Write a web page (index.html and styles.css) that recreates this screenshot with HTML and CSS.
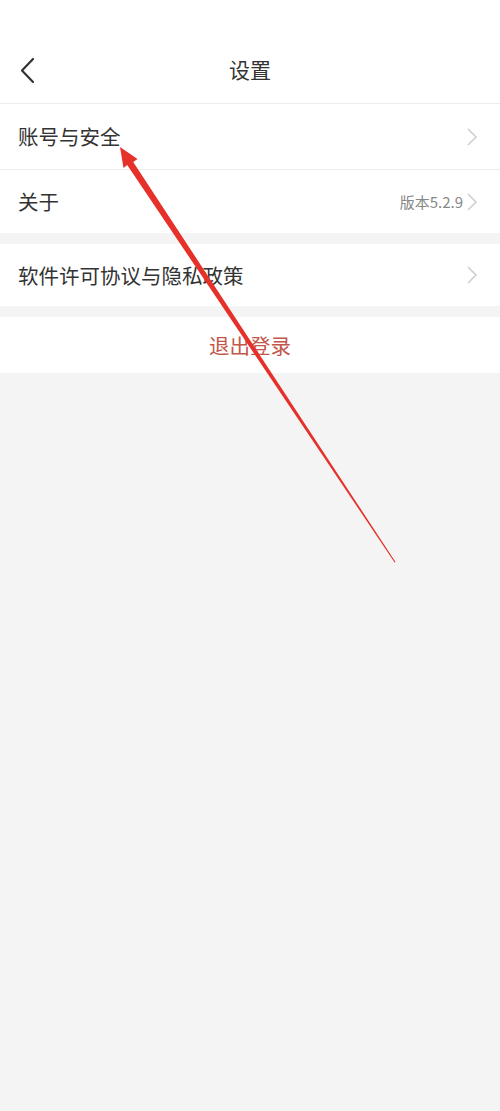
FILE: index.html
```html
<!DOCTYPE html>
<html lang="zh">
<head>
<meta charset="utf-8">
<link rel="stylesheet" href="styles.css">
</head>
<body>
<div class="page">
  <header class="topbar">
    <svg class="back" width="20" height="28" viewBox="0 0 20 28"><path d="M15 3 L4 14.5 L15 26" fill="none" stroke="#333" stroke-width="2.2" stroke-linecap="round" stroke-linejoin="round"/></svg>
    <div class="title">设置</div>
  </header>
  <section class="group">
    <div class="row r1"><span class="label">账号与安全</span><span class="right"><svg class="chev" width="12" height="20" viewBox="0 0 12 20"><path d="M2 2 L10 10 L2 18" fill="none" stroke="#cfcfcf" stroke-width="1.6"/></svg></span></div>
    <div class="row r2"><span class="label">关于</span><span class="right"><span class="value">版本5.2.9</span><svg class="chev" width="12" height="20" viewBox="0 0 12 20"><path d="M2 2 L10 10 L2 18" fill="none" stroke="#cfcfcf" stroke-width="1.6"/></svg></span></div>
  </section>
  <section class="group">
    <div class="row r3"><span class="label">软件许可协议与隐私政策</span><span class="right"><svg class="chev" width="12" height="20" viewBox="0 0 12 20"><path d="M2 2 L10 10 L2 18" fill="none" stroke="#cfcfcf" stroke-width="1.6"/></svg></span></div>
  </section>
  <section class="group">
    <div class="logout">退出登录</div>
  </section>
  <svg class="annot" width="500" height="1111" viewBox="0 0 500 1111">
    <polygon points="120,147 137.5,159 133.2,162 395.5,562 394.6,562.4 127.2,165 123.5,168" fill="#e5312a"/>
  </svg>
</div>
</body>
</html>
```
FILE: styles.css
```css
html, body {
  margin: 0;
  padding: 0;
  background: #f4f4f4;
}
body {
  font-family: "Noto Sans CJK SC", "Noto Sans", sans-serif;
  color: #333;
}
.page {
  position: relative;
  width: 500px;
  min-height: 1111px;
  background: #f4f4f4;
}
.topbar {
  position: relative;
  height: 67px;
  padding-top: 36px;
  background: #fff;
  display: flex;
  align-items: center;
  justify-content: center;
  border-bottom: 1px solid #ececec;
}
.back {
  position: absolute;
  left: 18px;
  top: 56px;
}
.title {
  font-size: 21px;
  color: #333;
  line-height: 1;
}
.group {
  background: #fff;
  margin-bottom: 11px;
}
.row {
  display: flex;
  align-items: center;
  justify-content: space-between;
  padding: 0 22px 0 18px;
}
.r1 {
  height: 65px;
  border-bottom: 1px solid #ececec;
}
.r2 {
  height: 63px;
}
.r3 {
  height: 62px;
}
.label {
  font-size: 20.5px;
  line-height: 1;
  color: #333;
}
.right {
  display: flex;
  align-items: center;
  gap: 3px;
}
.value {
  font-size: 15px;
  color: #888;
  line-height: 1;
}
.chev {
  display: block;
}
.logout {
  height: 56px;
  display: flex;
  align-items: center;
  justify-content: center;
  font-size: 20.5px;
  color: #c2574a;
}
.annot {
  position: absolute;
  left: 0;
  top: 0;
  pointer-events: none;
}
```
